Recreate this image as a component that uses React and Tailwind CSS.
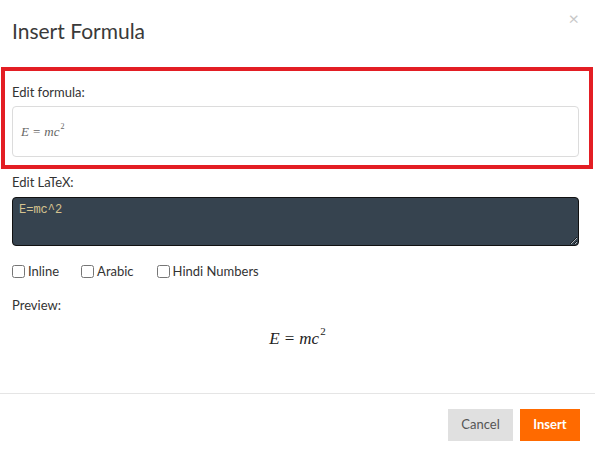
export default function App() {
  return (
    <div className="w-[595px] h-[456px] bg-white font-['Lato','Open_Sans',sans-serif] text-[#333] flex flex-col">
      <div className="h-[67px] flex items-start justify-between pl-3 pr-[16px]">
        <h1 className="mt-[18px] text-[21px] leading-[26px] font-normal text-[#3a3a3a]">Insert Formula</h1>
        <span className="mt-[8px] text-[18px] leading-[20px] text-[#c8c8c8]">×</span>
      </div>

      <div className="mx-[1px] w-[592px] border-4 border-[#e31e24] pl-[7px] pr-[10px] pt-[12px] pb-[8px]">
        <div className="text-[13px] leading-[18px] mb-[5px]">Edit formula:</div>
        <div className="h-[51px] rounded-[4px] border border-[#dcdcdc] flex items-center px-[8px] text-[#666] text-[13px] leading-none font-['Liberation_Serif',serif]">
          <i>E</i>
          <span className="mx-[4px]">=</span>
          <i>mc</i>
          <span className="text-[8px] relative -top-[5px] ml-[1px]">2</span>
        </div>
      </div>

      <div className="px-3">
        <div className="mt-[4px] text-[13px] leading-[18px]">Edit LaTeX:</div>
        <textarea
          readOnly
          defaultValue="E=mc^2"
          className="mt-[6px] block w-[567px] h-[49px] rounded-[4px] border border-[#111] bg-[#36434f] text-[#d6c38f] font-['Liberation_Mono',monospace] text-[12px] leading-[16px] px-[6px] py-[4px] outline-none resize-y"
        />

        <div className="mt-[16px] flex items-center text-[13px] leading-[18px] h-[18px]">
          <label className="flex items-center">
            <input type="checkbox" className="w-[13px] h-[13px] m-0 mr-[3px]" />
            Inline
          </label>
          <label className="flex items-center ml-[22px]">
            <input type="checkbox" className="w-[13px] h-[13px] m-0 mr-[3px]" />
            Arabic
          </label>
          <label className="flex items-center ml-[23px]">
            <input type="checkbox" className="w-[13px] h-[13px] m-0 mr-[3px]" />
            Hindi Numbers
          </label>
        </div>

        <div className="mt-[16px] text-[13px] leading-[18px]">Preview:</div>
        <div className="mt-[12px] flex justify-center items-center h-[24px] text-[17px] leading-none text-[#222] font-['Liberation_Serif',serif]">
          <i>E</i>
          <span className="mx-[5px]">=</span>
          <i>mc</i>
          <span className="text-[11px] relative -top-[7px] ml-[1px]">2</span>
        </div>
      </div>

      <div className="mt-auto h-[63px] border-t border-[#e5e5e5] flex justify-end items-start pt-[15px] pr-[15px] gap-[7px] text-[13px]">
        <button className="w-[65px] h-[32px] bg-[#e0e0e0] text-[#555]">Cancel</button>
        <button className="w-[60px] h-[32px] bg-[#ff6a00] text-white font-bold">Insert</button>
      </div>
    </div>
  );
}
